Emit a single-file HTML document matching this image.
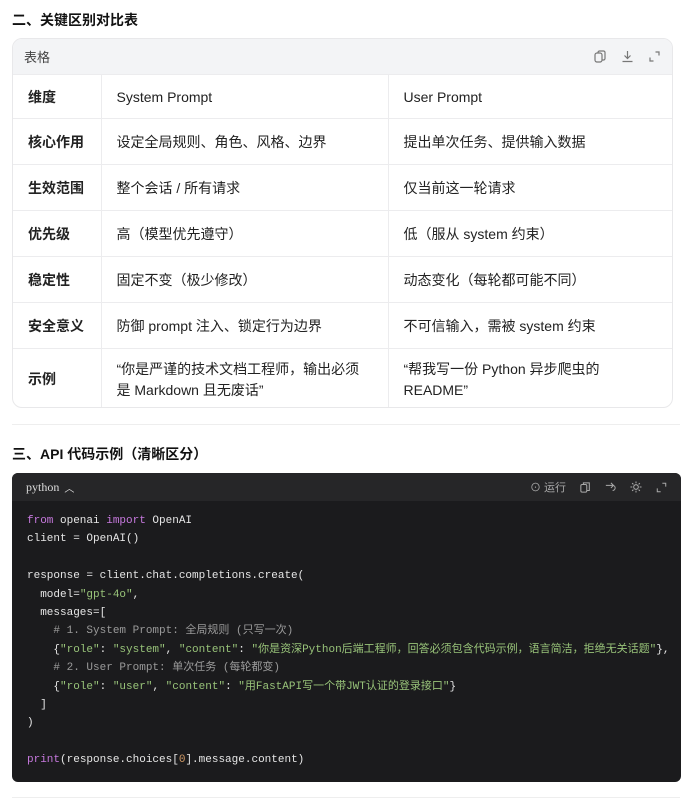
<!DOCTYPE html>
<html><head><meta charset="utf-8"><style>
*{margin:0;padding:0;box-sizing:border-box}
body{width:685px;height:800px;background:#fff;font-family:"Liberation Sans","Noto Sans CJK SC",sans-serif;color:#1f1f1f;position:relative;overflow:hidden}
h2{position:absolute;left:12px;font-size:14px;font-weight:bold;color:#111}
.card{position:absolute;left:12px;top:38px;width:661px;height:370px;border:1px solid #e8e8ea;border-radius:10px;overflow:hidden}
.bar{height:35px;background:#f3f4f6;display:flex;align-items:center;padding:0 11px;font-size:13px;color:#444}
.bar .ic{margin-left:auto;display:flex;gap:14px}
table{border-collapse:collapse;width:100%;font-size:14px}
td{border-top:1px solid #ececee;border-left:1px solid #ececee;padding:0 15px;height:46px;vertical-align:middle;color:#222}
td:first-child{border-left:none;width:88px;font-weight:bold}
td:nth-child(2){width:287px}
tr.h td{height:44px}
tr.last td{height:62px;line-height:21px}
.hr{position:absolute;left:12px;width:668px;height:1px;background:#eee}
.code{position:absolute;left:12px;top:473px;width:669px;height:309px;background:#1b1b1d;border-radius:6px;overflow:hidden}
.ch{height:28px;background:#262628;display:flex;align-items:center;padding:0 14px;color:#ddd;font-size:12px;font-family:"Liberation Serif",serif}
.ch .r{margin-left:auto;display:flex;gap:14px;align-items:center;color:#aaa;font-family:"Liberation Sans","Noto Sans CJK SC",sans-serif;font-size:11px}
pre{font-family:"Liberation Mono","Noto Sans CJK SC",monospace;font-size:11px;line-height:18.4px;color:#e6e6e6;padding:11px 15px;white-space:pre}
.k{color:#c678dd}.s{color:#98c379}.c{color:#9a9a9a}.n{color:#d19a66}
</style></head><body>
<h2 style="top:10px">二、关键区别对比表</h2>
<div class="card">
<div class="bar">表格<div class="ic">
<svg width="13" height="13" viewBox="0 0 13 13" fill="none" stroke="#777" stroke-width="1.2"><rect x="1" y="3" width="7" height="9" rx="2"/><path d="M4 3V2.5A1.5 1.5 0 0 1 5.5 1h4A1.5 1.5 0 0 1 11 2.5v6A1.5 1.5 0 0 1 9.5 10H8"/></svg>
<svg width="13" height="13" viewBox="0 0 13 13" fill="none" stroke="#777" stroke-width="1.2"><path d="M6.5 1v7M3.5 5.5l3 3 3-3M1.5 11.5h10"/></svg>
<svg width="13" height="13" viewBox="0 0 13 13" fill="none" stroke="#777" stroke-width="1.2"><path d="M7.5 2h3.5v3.5M5.5 11H2V7.5"/></svg>
</div></div>
<table>
<tr class="h"><td>维度</td><td>System Prompt</td><td>User Prompt</td></tr>
<tr><td>核心作用</td><td>设定全局规则、角色、风格、边界</td><td>提出单次任务、提供输入数据</td></tr>
<tr><td>生效范围</td><td>整个会话 / 所有请求</td><td>仅当前这一轮请求</td></tr>
<tr><td>优先级</td><td>高（模型优先遵守）</td><td>低（服从 system 约束）</td></tr>
<tr><td>稳定性</td><td>固定不变（极少修改）</td><td>动态变化（每轮都可能不同）</td></tr>
<tr><td>安全意义</td><td>防御 prompt 注入、锁定行为边界</td><td>不可信输入，需被 system 约束</td></tr>
<tr class="last"><td>示例</td><td>“你是严谨的技术文档工程师，输出必须<br>是 Markdown 且无废话”</td><td>“帮我写一份 Python 异步爬虫的<br>README”</td></tr>
</table></div>
<div class="hr" style="top:424px"></div>
<h2 style="top:444px">三、API 代码示例（清晰区分）</h2>
<div class="code">
<div class="ch">python <span style="margin-left:5px;font-size:10px">︿</span><div class="r">
<span>⊙ 运行</span>
<svg width="11" height="11" viewBox="0 0 13 13" fill="none" stroke="#aaa" stroke-width="1.2"><rect x="1" y="3" width="7" height="9" rx="1.5"/><path d="M4 3V1h7v9H8"/></svg>
<svg width="11" height="11" viewBox="0 0 13 13" fill="none" stroke="#aaa" stroke-width="1.2"><path d="M1 4h8a3 3 0 0 1 0 6M7 1l3 3-3 3"/></svg>
<svg width="12" height="12" viewBox="0 0 13 13" fill="none" stroke="#aaa" stroke-width="1.1"><circle cx="6.5" cy="6.5" r="2.5"/><path d="M6.5 0.5v2M6.5 10.5v2M0.5 6.5h2M10.5 6.5h2M2.3 2.3l1.4 1.4M9.3 9.3l1.4 1.4M2.3 10.7l1.4-1.4M9.3 3.7l1.4-1.4"/></svg>
<svg width="11" height="11" viewBox="0 0 13 13" fill="none" stroke="#aaa" stroke-width="1.2"><path d="M7.5 1.5h4v4M5.5 11.5h-4v-4"/></svg>
</div></div>
<pre><span class="k">from</span> openai <span class="k">import</span> OpenAI
client = OpenAI()

response = client.chat.completions.create(
  model=<span class="s">"gpt-4o"</span>,
  messages=[
    <span class="c"># 1. System Prompt: 全局规则 (只写一次)</span>
    {<span class="s">"role"</span>: <span class="s">"system"</span>, <span class="s">"content"</span>: <span class="s">"你是资深Python后端工程师，回答必须包含代码示例，语言简洁，拒绝无关话题"</span>},
    <span class="c"># 2. User Prompt: 单次任务 (每轮都变)</span>
    {<span class="s">"role"</span>: <span class="s">"user"</span>, <span class="s">"content"</span>: <span class="s">"用FastAPI写一个带JWT认证的登录接口"</span>}
  ]
)

<span class="k">print</span>(response.choices[<span class="n">0</span>].message.content)</pre>
</div>
<div class="hr" style="top:797px"></div>
</body></html>
